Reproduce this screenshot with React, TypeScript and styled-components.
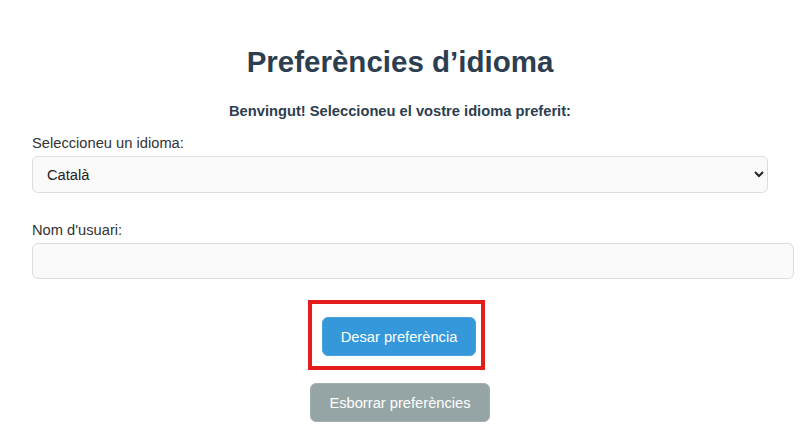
import React from 'react';
import styled, { createGlobalStyle } from 'styled-components';

const GlobalStyle = createGlobalStyle`
  html, body {
    margin: 0;
    padding: 0;
    background: #ffffff;
  }

  body {
    font-family: 'Liberation Sans', Arial, sans-serif;
    color: #333333;
  }
`;

const Page = styled.div`
  padding: 46px 32px 0;
`;

const Title = styled.h1`
  margin: 0;
  font-size: 29.5px;
  line-height: 32px;
  font-weight: bold;
  text-align: center;
  color: #2c3e50;
`;

const Welcome = styled.p`
  margin: 24px 0 0;
  font-size: 14.7px;
  line-height: 18px;
  font-weight: bold;
  text-align: center;
  color: #2c3e50;
`;

const Field = styled.div<{ $top: number }>`
  margin-top: ${(props) => props.$top}px;
`;

const Label = styled.label`
  display: block;
  margin-bottom: 4px;
  font-size: 14.7px;
  line-height: 18px;
  color: #333333;
`;

const Select = styled.select`
  display: block;
  width: 100%;
  height: 37px;
  padding: 0 10px;
  font-family: inherit;
  font-size: 14.7px;
  color: #222222;
  background: #fafafa;
  border: 1px solid #dcdce4;
  border-radius: 6px;
  box-sizing: border-box;
`;

const TextInput = styled.input`
  display: block;
  width: 100%;
  height: 34px;
  padding: 0 12px;
  font-family: inherit;
  font-size: 14.7px;
  background: #fafafa;
  border: 1px solid #dcdce4;
  border-radius: 6px;
  box-sizing: content-box;
`;

const Actions = styled.div`
  display: flex;
  flex-direction: column;
  align-items: center;
  margin-top: 21px;
`;

const Highlight = styled.div`
  display: inline-block;
  padding: 13px 5px 10px 10px;
  margin-left: -7px;
  border: 4px solid #e41c1c;
`;

const Button = styled.button<{ $tone: 'primary' | 'muted' }>`
  display: block;
  padding: 0 18px;
  height: 39px;
  font-family: inherit;
  font-size: 14.7px;
  color: #ffffff;
  border: 1px solid
    ${(props) => (props.$tone === 'primary' ? '#4aa3df' : '#a3b0b1')};
  border-radius: 6px;
  background: ${(props) => (props.$tone === 'primary' ? '#3498db' : '#95a5a6')};
  cursor: pointer;
`;

const SecondRow = styled.div`
  margin-top: 13px;
`;

export default function App() {
  return (
    <>
      <GlobalStyle />
      <Page>
        <Title>Preferències d’idioma</Title>
        <Welcome>Benvingut! Seleccioneu el vostre idioma preferit:</Welcome>

        <Field $top={14}>
          <Label htmlFor="lang">Seleccioneu un idioma:</Label>
          <Select id="lang" defaultValue="ca">
            <option value="ca">Català</option>
            <option value="es">Español</option>
            <option value="en">English</option>
          </Select>
        </Field>

        <Field $top={28}>
          <Label htmlFor="user">Nom d'usuari:</Label>
          <TextInput id="user" type="text" />
        </Field>

        <Actions>
          <Highlight>
            <Button $tone="primary">Desar preferència</Button>
          </Highlight>
          <SecondRow>
            <Button $tone="muted">Esborrar preferències</Button>
          </SecondRow>
        </Actions>
      </Page>
    </>
  );
}
